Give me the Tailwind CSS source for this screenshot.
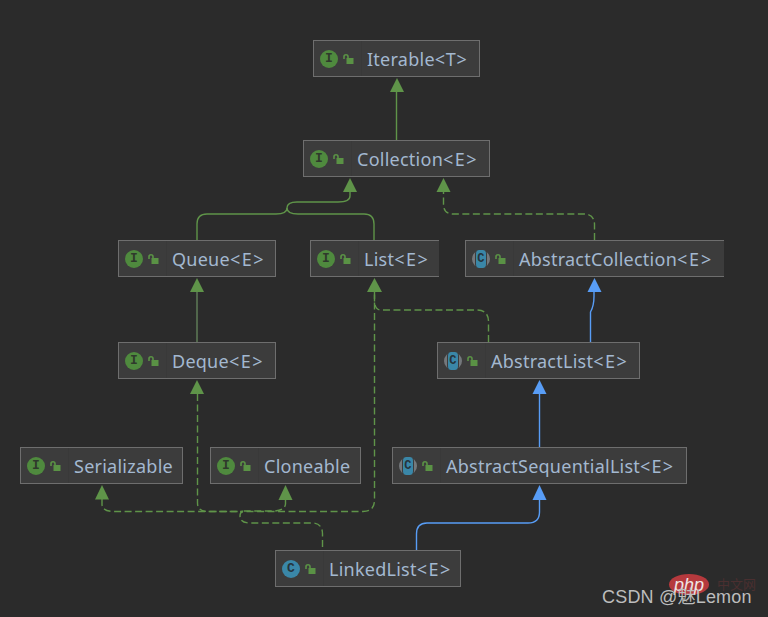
<!DOCTYPE html>
<html lang="en">
<head>
<meta charset="UTF-8">
<title>LinkedList diagram</title>
<script src="https://cdn.jsdelivr.net/npm/@tailwindcss/browser@4"></script>
</head>
<body class="bg-[#2b2b2b]">
<div class="relative w-[768px] h-[617px] overflow-hidden bg-[#2b2b2b] font-['Noto_Sans','Open_Sans',sans-serif] text-[18px] tracking-[0.25px] text-[#a3b8d0]">

  <!-- edges -->
  <svg class="absolute left-0 top-0" width="768" height="617" fill="none" stroke-width="1.4">
    <defs>
      <g id="lock">
        <rect x="3.500" y="4" width="7" height="6" fill="#5a9245" stroke="none"/>
        <path d="M1 5V2.800a2 2 0 0 1 4 0V5" stroke="#5a9245" stroke-width="1.600" fill="none"/>
      </g>
    </defs>
    <g stroke="#5f9449">
      <path d="M396.500 92V140"/>
      <path d="M350 192V196Q350 202 338 202H297Q287 202 287 208Q287 214 276 214H207Q197 214 197 224V240"/>
      <path d="M287 208Q287 214 298 214H364Q374 214 374 224V240"/>
      <path d="M197 292V342" stroke="#62805a"/>
    </g>
    <g stroke="#5f9449" stroke-dasharray="7 3.500">
      <path d="M594.500 240V224Q594 214 584 214H453Q443.500 214 443.500 204V192"/>
      <path d="M488.500 342V321Q488 310 477 310H381Q374.500 310 374.500 300V292"/>
      <path d="M374.500 292V500Q374.500 511.500 363 511.500H243Q240 512 240 516Q240 523 250 523H312Q322.500 523 322.500 534V550"/>
      <path d="M197.500 394V503Q197.500 511.500 208 511.500H243"/>
      <path d="M102 499V505Q103 511.500 114 511.500H243"/>
      <path d="M285.500 500V504Q285 510 275 511H243"/>
    </g>
    <g stroke="#589df6">
      <path d="M590.500 342V312Q594 306 594 296V292"/>
      <path d="M539.500 394V447"/>
      <path d="M539.500 500V512Q539.500 523 528 523H427Q416.500 523 416.500 534V550"/>
    </g>
    <g fill="#5f9449">
      <path d="M397 78L404 92H390Z"/>
      <path d="M350 178L357 192H343Z"/>
      <path d="M443.500 178L450.500 192H436.500Z"/>
      <path d="M197 278L204 292H190Z"/>
      <path d="M374.500 278L382 292H367Z"/>
      <path d="M197 380L204 394H190Z"/>
      <path d="M102 485L109 499.500H95Z"/>
      <path d="M285.500 485L292.500 500H278.500Z"/>
    </g>
    <g fill="#589df6">
      <path d="M594.500 278L601.500 292H587.500Z"/>
      <path d="M539.500 380L546.500 394H532.500Z"/>
      <path d="M539.500 485L546.500 500H532.500Z"/>
    </g>
  </svg>

  <!-- nodes -->
  <div class="absolute left-[313px] top-[40px] w-[167px] h-[37px] flex items-center border border-[#6e6e6e] bg-[#3c3c3c]">
    <div class="w-[48px] h-full flex items-center pl-[6px] gap-[5px] border-r border-[#393939]">
      <span class="w-[18px] h-[18px] rounded-full bg-[#4f8a3e] flex items-center justify-center font-['Liberation_Mono',monospace] font-bold text-[13px] leading-none text-[#2f3a2c]">I</span>
      <svg width="11" height="10"><use href="#lock"/></svg>
    </div>
    <span class="pl-[5px] pt-[2px] whitespace-nowrap">Iterable<span class="tracking-[0.7px]">&lt;T&gt;</span></span>
  </div>

  <div class="absolute left-[303px] top-[140px] w-[187px] h-[37px] flex items-center border border-[#6e6e6e] bg-[#3c3c3c]">
    <div class="w-[48px] h-full flex items-center pl-[6px] gap-[5px] border-r border-[#393939]">
      <span class="w-[18px] h-[18px] rounded-full bg-[#4f8a3e] flex items-center justify-center font-['Liberation_Mono',monospace] font-bold text-[13px] leading-none text-[#2f3a2c]">I</span>
      <svg width="11" height="10"><use href="#lock"/></svg>
    </div>
    <span class="pl-[5px] pt-[2px] whitespace-nowrap">Collection<span class="tracking-[1.5px]">&lt;E&gt;</span></span>
  </div>

  <div class="absolute left-[118px] top-[240px] w-[158px] h-[37px] flex items-center border border-[#6e6e6e] bg-[#3c3c3c]">
    <div class="w-[48px] h-full flex items-center pl-[6px] gap-[5px] border-r border-[#393939]">
      <span class="w-[18px] h-[18px] rounded-full bg-[#4f8a3e] flex items-center justify-center font-['Liberation_Mono',monospace] font-bold text-[13px] leading-none text-[#2f3a2c]">I</span>
      <svg width="11" height="10"><use href="#lock"/></svg>
    </div>
    <span class="pl-[5px] pt-[2px] whitespace-nowrap">Queue<span class="tracking-[1.5px]">&lt;E&gt;</span></span>
  </div>

  <div class="absolute left-[310px] top-[240px] w-[129px] h-[37px] flex items-center border border-r-0 border-[#6e6e6e] bg-[#3c3c3c]">
    <div class="w-[48px] h-full flex items-center pl-[6px] gap-[5px] border-r border-[#393939]">
      <span class="w-[18px] h-[18px] rounded-full bg-[#4f8a3e] flex items-center justify-center font-['Liberation_Mono',monospace] font-bold text-[13px] leading-none text-[#2f3a2c]">I</span>
      <svg width="11" height="10"><use href="#lock"/></svg>
    </div>
    <span class="pl-[5px] pt-[2px] whitespace-nowrap">List<span class="tracking-[1.5px]">&lt;E&gt;</span></span>
  </div>

  <div class="absolute left-[465px] top-[240px] w-[259px] h-[37px] flex items-center border border-r-0 border-[#6e6e6e] bg-[#3c3c3c]">
    <div class="w-[48px] h-full flex items-center pl-[6px] gap-[5px] border-r border-[#393939]">
      <span class="w-[18px] h-[18px] rounded-full bg-[#74787c] flex items-center justify-center"><span class="w-[12px] h-[18px] rounded-[4px] bg-[#3a87a8] border-x border-[#3c3c3c] flex items-center justify-center font-['Liberation_Mono',monospace] font-bold text-[12px] leading-none text-[#26343c]">C</span></span>
      <svg width="11" height="10"><use href="#lock"/></svg>
    </div>
    <span class="pl-[5px] pt-[2px] whitespace-nowrap">AbstractCollection<span class="tracking-[1.8px]">&lt;E&gt;</span></span>
  </div>

  <div class="absolute left-[118px] top-[342px] w-[158px] h-[37px] flex items-center border border-[#6e6e6e] bg-[#3c3c3c]">
    <div class="w-[48px] h-full flex items-center pl-[6px] gap-[5px] border-r border-[#393939]">
      <span class="w-[18px] h-[18px] rounded-full bg-[#4f8a3e] flex items-center justify-center font-['Liberation_Mono',monospace] font-bold text-[13px] leading-none text-[#2f3a2c]">I</span>
      <svg width="11" height="10"><use href="#lock"/></svg>
    </div>
    <span class="pl-[5px] pt-[2px] whitespace-nowrap">Deque<span class="tracking-[1.5px]">&lt;E&gt;</span></span>
  </div>

  <div class="absolute left-[437px] top-[342px] w-[203px] h-[37px] flex items-center border border-[#6e6e6e] bg-[#3c3c3c]">
    <div class="w-[48px] h-full flex items-center pl-[6px] gap-[5px] border-r border-[#393939]">
      <span class="w-[18px] h-[18px] rounded-full bg-[#74787c] flex items-center justify-center"><span class="w-[12px] h-[18px] rounded-[4px] bg-[#3a87a8] border-x border-[#3c3c3c] flex items-center justify-center font-['Liberation_Mono',monospace] font-bold text-[12px] leading-none text-[#26343c]">C</span></span>
      <svg width="11" height="10"><use href="#lock"/></svg>
    </div>
    <span class="pl-[5px] pt-[2px] whitespace-nowrap">AbstractList<span class="tracking-[1.5px]">&lt;E&gt;</span></span>
  </div>

  <div class="absolute left-[20px] top-[447px] w-[163px] h-[37px] flex items-center border border-[#6e6e6e] bg-[#3c3c3c]">
    <div class="w-[48px] h-full flex items-center pl-[6px] gap-[5px] border-r border-[#393939]">
      <span class="w-[18px] h-[18px] rounded-full bg-[#4f8a3e] flex items-center justify-center font-['Liberation_Mono',monospace] font-bold text-[13px] leading-none text-[#2f3a2c]">I</span>
      <svg width="11" height="10"><use href="#lock"/></svg>
    </div>
    <span class="pl-[5px] pt-[2px] whitespace-nowrap">Serializable</span>
  </div>

  <div class="absolute left-[210px] top-[447px] w-[151px] h-[37px] flex items-center border border-[#6e6e6e] bg-[#3c3c3c]">
    <div class="w-[48px] h-full flex items-center pl-[6px] gap-[5px] border-r border-[#393939]">
      <span class="w-[18px] h-[18px] rounded-full bg-[#4f8a3e] flex items-center justify-center font-['Liberation_Mono',monospace] font-bold text-[13px] leading-none text-[#2f3a2c]">I</span>
      <svg width="11" height="10"><use href="#lock"/></svg>
    </div>
    <span class="pl-[5px] pt-[2px] whitespace-nowrap">Cloneable</span>
  </div>

  <div class="absolute left-[392px] top-[447px] w-[295px] h-[37px] flex items-center border border-[#6e6e6e] bg-[#3c3c3c]">
    <div class="w-[48px] h-full flex items-center pl-[6px] gap-[5px] border-r border-[#393939]">
      <span class="w-[18px] h-[18px] rounded-full bg-[#74787c] flex items-center justify-center"><span class="w-[12px] h-[18px] rounded-[4px] bg-[#3a87a8] border-x border-[#3c3c3c] flex items-center justify-center font-['Liberation_Mono',monospace] font-bold text-[12px] leading-none text-[#26343c]">C</span></span>
      <svg width="11" height="10"><use href="#lock"/></svg>
    </div>
    <span class="pl-[5px] pt-[2px] whitespace-nowrap">AbstractSequentialList<span class="tracking-[1.2px]">&lt;E&gt;</span></span>
  </div>

  <div class="absolute left-[275px] top-[550px] w-[186px] h-[37px] flex items-center border border-[#6e6e6e] bg-[#3c3c3c]">
    <div class="w-[48px] h-full flex items-center pl-[6px] gap-[5px] border-r border-[#393939]">
      <span class="w-[18px] h-[18px] rounded-full bg-[#3a87a8] flex items-center justify-center font-['Liberation_Mono',monospace] font-bold text-[13px] leading-none text-[#26343c]">C</span>
      <svg width="11" height="10"><use href="#lock"/></svg>
    </div>
    <span class="pl-[5px] pt-[2px] whitespace-nowrap">LinkedList<span class="tracking-[1.5px]">&lt;E&gt;</span></span>
  </div>

  <!-- watermark -->
  <div class="absolute left-[669px] top-[574px] w-[40px] h-[21px] rounded-[50%] bg-[#b5393d] flex items-center justify-center font-['Liberation_Sans',sans-serif] italic text-[18px] tracking-normal leading-none text-[#f0e4e4]">php</div>
  <div class="absolute left-[717px] top-[575px] font-['Noto_Sans_CJK_SC',sans-serif] text-[13px] tracking-normal leading-[18px] text-[#4a2f30]">中文网</div>
  <div class="absolute left-[602px] top-[587px] font-['Liberation_Sans','Noto_Sans_CJK_SC',sans-serif] text-[18px] tracking-[0.2px] leading-[20px] text-[#bdbdbd] whitespace-nowrap">CSDN @魅Lemon</div>
</div>
</body>
</html>
